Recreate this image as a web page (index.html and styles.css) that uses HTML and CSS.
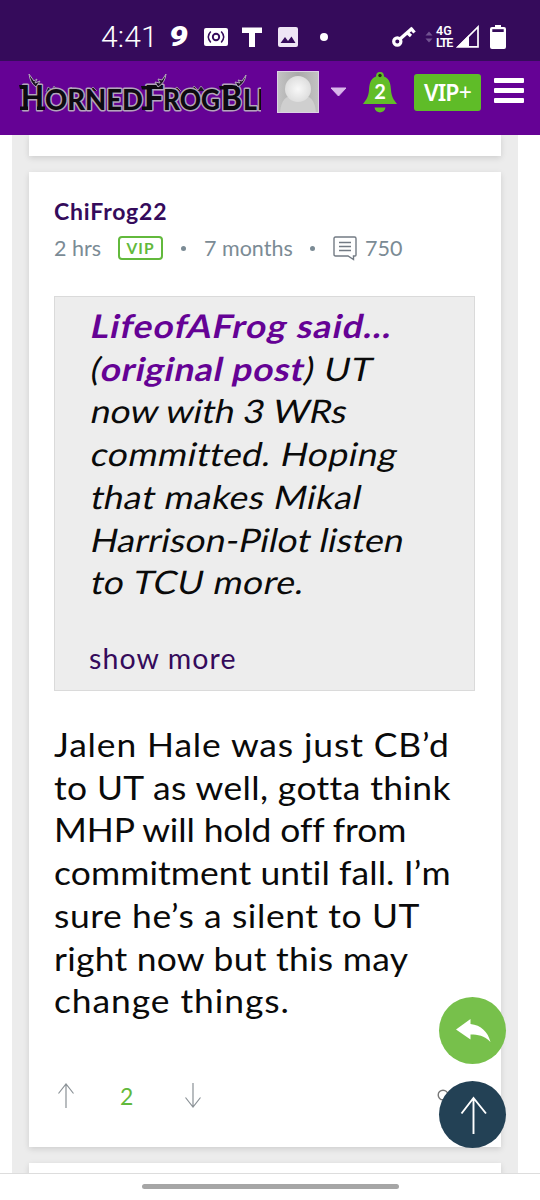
FILE: index.html
```html
<!DOCTYPE html>
<html lang="en">
<head>
<meta charset="utf-8">
<title>HornedFrogBlitz</title>
<link rel="stylesheet" href="styles.css">
</head>
<body>
<div class="screen">
  <header class="statusbar">
    <span class="clock">4:41</span>
    <span class="nine">9</span>
    <svg class="cam" width="24" height="20" viewBox="0 0 24 20"><rect y="1" width="24" height="18" rx="2" fill="#fff"/><circle cx="12" cy="10" r="3.2" fill="none" stroke="#350b5b" stroke-width="1.9"/><path d="M6.8 4.6Q1.8 10 6.8 15.4M17.2 4.6Q22.2 10 17.2 15.4" fill="none" stroke="#350b5b" stroke-width="1.5"/></svg>
    <svg class="tee" width="20" height="20" viewBox="0 0 20 20"><path d="M0 0.5H20V6H13V20H7V6H0Z" fill="#fff"/></svg>
    <svg class="photo" width="20" height="20" viewBox="0 0 20 20"><rect width="20" height="20" rx="2" fill="#eee5f5"/><path d="M2.5 16L7 10L10 14L13.5 9.5L17.5 16Z" fill="#350b5b"/></svg>
    <i class="dot"></i>
    <svg class="key" width="24" height="22" viewBox="0 0 24 22"><g fill="none" stroke="#fff"><circle cx="5.3" cy="15.5" r="3.6" stroke-width="3.2"/><path d="M8 13L20.5 2" stroke-width="3.4"/><path d="M19 2.5L22.5 6.5M15 6.5L19 10" stroke-width="3.3"/></g></svg>
    <svg class="updown" width="8" height="12" viewBox="0 0 8 12"><path d="M.5 4.5L4 .5L7.5 4.5ZM.5 7.5L4 11.5L7.5 7.5Z" fill="#725491"/></svg>
    <span class="network"><b>4G</b><b class="lte">LTE</b></span>
    <svg class="signal" width="23" height="23" viewBox="0 0 23 23"><path d="M2 21.8L22 2V21.8Z" fill="none" stroke="#fff" stroke-width="1.7"/><path d="M1 22L13 10V22Z" fill="#fff"/></svg>
    <svg class="battery" width="16" height="24" viewBox="0 0 16 24"><path d="M5 0H11V2H14Q16 2 16 4V22Q16 24 14 24H2Q0 24 0 22V4Q0 2 2 2H5Z" fill="#fff"/><path d="M2.3 4.2H13.7V7H2.3Z" fill="#350b5b"/></svg>
  </header>
  <nav class="navbar">
    <svg class="logo" width="244" height="46" viewBox="0 0 244 46">
      <path class="spikes" d="M29 20L31 15L35 18L37 14L41 20M51 19L54 15L58 19M72 19L76 15L80 19M95 19L100 16L105 19M155 19L160 15L164 19M174 19L177 14L181 18L184 14L188 19"/>
      <g class="logo-text">
        <text x="4" y="38" font-size="34" textLength="23" lengthAdjust="spacingAndGlyphs">H</text>
        <text x="28" y="38" font-size="27.500" textLength="98" lengthAdjust="spacingAndGlyphs">ORNED</text>
        <text x="127" y="38" font-size="34" textLength="20" lengthAdjust="spacingAndGlyphs">F</text>
        <text x="146" y="38" font-size="27.500" textLength="57" lengthAdjust="spacingAndGlyphs">ROG</text>
        <text x="204" y="38" font-size="34" textLength="21" lengthAdjust="spacingAndGlyphs">B</text>
        <text x="226" y="38" font-size="27.500" textLength="22" lengthAdjust="spacingAndGlyphs">LI</text>
      </g>
      <path class="serif" d="M2 13H9V17H3ZM3 34.500H11V38H3ZM20 34.500H28V38H20ZM124 14H131V17.500H125ZM125 34.500H135V38H125ZM202 14H208V17.500H203Z"/>
      <path class="horn" d="M19 15Q13 11 12 2L17 9L20 7L18 11L23 9Z"/>
      <path class="horn" d="M141 15Q148 11 149 2L145 8L141 7L143 11L138 10Z"/>
      <path class="horn" d="M221 15Q228 11 229 3L225 9L221 8L223 11L218 10Z"/>
    </svg>
    <svg class="avatar" width="42" height="42" viewBox="0 0 42 42"><defs><radialGradient id="face"><stop offset="0" stop-color="#f8f8f8"/><stop offset=".7" stop-color="#e6e6e6"/><stop offset="1" stop-color="#dedede"/></radialGradient><linearGradient id="back"><stop offset="0" stop-color="#c4c4c4"/><stop offset=".5" stop-color="#a9a9a9"/><stop offset="1" stop-color="#c4c4c4"/></linearGradient></defs><rect width="42" height="42" fill="url(#back)"/><path d="M3 42Q4 27 13 25H29Q38 27 39 42Z" fill="#cfcfcf"/><circle cx="21" cy="18" r="13" fill="url(#face)"/><rect x=".5" y=".5" width="41" height="41" fill="none" stroke="#ddd2e5"/></svg>
    <svg class="caret" width="17" height="10" viewBox="0 0 17 10"><path d="M1 1H16L8.5 9Z" fill="#d9b6eb" stroke="#d9b6eb" stroke-linejoin="round"/></svg>
    <div class="bell">
      <svg width="36" height="42" viewBox="0 0 36 42"><path d="M18 1C15 1 14 3 14 5.5C8 8 7.5 13 7 19C6.500 26 4 29 1 33H35C32 29 29.500 26 29 19C28.500 13 28 8 22 5.500C22 3 21 1 18 1ZM12.500 36.500H23.500C22.500 43 13.500 43 12.500 36.500Z" fill="#62bd28"/><circle cx="18" cy="4.500" r="1.700" fill="#26300f"/></svg>
      <span class="bell-count">2</span>
    </div>
    <span class="upgrade">VIP<span class="plus">+</span></span>
    <span class="menu"><i></i><i></i><i></i></span>
  </nav>

  <main class="feed">
    <div class="thread">
      <section class="card card-prev"></section>
      <article class="card post">
        <h2 class="author">ChiFrog22</h2>
        <div class="meta">
          <span class="ago">2 hrs</span>
          <span class="vip">VIP</span>
          <i class="sep"></i>
          <span class="months">7 months</span>
          <i class="sep"></i>
          <svg class="comment" width="24" height="25" viewBox="0 0 24 25"><path d="M2.500 1H21.500Q23 1 23 2.500V19Q23 20 22 20H20.500V23.500L15 20H2.500Q1 20 1 18.500V2.500Q1 1 2.500 1ZM6 6.500H18M6 10.500H18M6 14.500H18" fill="none" stroke="#737b84" stroke-width="1.400"/></svg>
          <span class="count">750</span>
        </div>
        <blockquote class="quote">
          <p class="lines">
            <span class="l q1"><b>LifeofAFrog said...</b></span>
            <span class="l q2">(<b>original post</b>) UT</span>
            <span class="l q3">now with 3 WRs</span>
            <span class="l q4">committed. Hoping</span>
            <span class="l q5">that makes Mikal</span>
            <span class="l q6">Harrison-Pilot listen</span>
            <span class="l q7">to TCU more.</span>
          </p>
          <a class="more">show more</a>
        </blockquote>
        <p class="lines body">
          <span class="l b1">Jalen Hale was just CB’d</span>
          <span class="l b2">to UT as well, gotta think</span>
          <span class="l b3">MHP will hold off from</span>
          <span class="l b4">commitment until fall. I’m</span>
          <span class="l b5">sure he’s a silent to UT</span>
          <span class="l b6">right now but this may</span>
          <span class="l b7">change things.</span>
        </p>
        <footer class="votes">
          <svg width="16" height="25" viewBox="0 0 16 25"><path d="M8 25V1M.5 10.500L8 1L15.500 10.500" fill="none" stroke="#8a9196" stroke-width="1.200"/></svg>
          <span class="score">2</span>
          <svg width="16" height="25" viewBox="0 0 16 25"><path d="M8 0V24M.5 14.500L8 24L15.500 14.500" fill="none" stroke="#8a9196" stroke-width="1.200"/></svg>
          <svg class="share" width="12" height="12" viewBox="0 0 12 12"><circle cx="6" cy="6" r="4.800" fill="none" stroke="#777" stroke-width="1.400"/></svg>
        </footer>
      </article>
      <section class="card card-next"></section>
    </div>
  </main>
  <div class="gesture"><i></i></div>

  <div class="floating">
    <button class="fab reply" aria-label="Reply"><svg width="68" height="68" viewBox="0 0 68 68"><path d="M17 32.500L31.500 22V27C42 28 49 35 51.500 45C45 38.500 39 37.500 31.500 37.500V42.500Z" fill="#fff"/></svg></button>
    <button class="fab top" aria-label="Back to top"><svg width="68" height="68" viewBox="0 0 68 68"><path d="M34.500 53V17M22.500 32.500L34.500 17L47 32.500" fill="none" stroke="#fff" stroke-width="1.900"/></svg></button>
  </div>
</div>
</body>
</html>
```
FILE: styles.css
```css
* { box-sizing: border-box; }
body { margin: 0; font-family: Lato, "Open Sans", sans-serif; color: #0a0a0a; font-variant-ligatures: none; }
svg { display: block; flex: none; }
i { flex: none; }
.screen { position: relative; width: 540px; height: 1200px; overflow: hidden; background: #fff; display: flex; flex-direction: column; }

.statusbar { flex: none; height: 61px; padding: 12px 0 0 101px; background: #350b5b; color: #fff; display: flex; align-items: center; }
.clock { width: 68px; font: 300 30px/30px Roboto, sans-serif; letter-spacing: .1px; flex: none; }
.nine { width: 35px; font: italic 900 27px/27px Roboto, sans-serif; padding-top: 2px; display: inline-block; transform: scaleX(1.25); transform-origin: left; }
.tee { margin-left: 14px; }
.photo { margin-left: 16px; }
.dot { width: 8px; height: 8px; margin-left: 22px; border-radius: 50%; background: #fff; }
.key { margin-left: 64px; }
.updown { margin-left: 9px; }
.network { width: 18px; margin-left: 3px; display: flex; flex-direction: column; font: 600 12.500px/12px Roboto, sans-serif; gap: 0; }
.network b { font-weight: 600; height: 12px; }
.lte { letter-spacing: -1.400px; }
.signal { margin-left: 2px; }
.battery { margin-left: 11px; }

.navbar { flex: none; height: 74px; padding-left: 17px; background: #650295; display: flex; align-items: center; padding-bottom: 12px; }
.logo { margin-top: 5px; overflow: hidden; }
.logo-text { font-family: Lato, sans-serif; font-weight: 900; fill: #0d0a10; stroke: #b3a6bb; stroke-width: 3px; paint-order: stroke; stroke-linejoin: round; }
.serif { fill: #0d0a10; }
.horn { fill: #1c1324; stroke: #b3a6bb; stroke-width: 1px; }
.spikes { fill: #1c1324; stroke: #a99bb2; stroke-width: .8px; }
.avatar { margin-left: 16px; }
.caret { margin-left: 11px; }
.bell { position: relative; margin-left: 15px; }
.bell-count { position: absolute; left: 0; right: 0; top: 7px; text-align: center; color: #fff; font: 700 20px/26px Lato, sans-serif; }
.upgrade { margin-left: 16px; width: 67px; height: 37px; border-radius: 3px; background: #5fbc28; color: #fff; text-align: center; font: 600 23px/36px "Noto Sans", sans-serif; letter-spacing: -.8px; }
.plus { font-weight: 400; }
.menu { margin-left: 13px; margin-top: -3px; width: 30px; display: flex; flex-direction: column; gap: 5px; }
.menu i { height: 5px; border-radius: 1px; background: #fff; }

.feed { height: 1038px; padding: 0 22px 0 12px; overflow: hidden; }
.thread { height: 100%; padding: 0 17px 0 16.500px; background: #ececec; display: flex; flex-direction: column; gap: 16px; }
.card { background: #fff; box-shadow: 0 2px 6px rgba(0,0,0,.13); flex: none; }
.card-prev { height: 21px; }
.card-next { height: 60px; }
.post { height: 975px; padding: 25px 26px 0 25.500px; }
.author { margin: 0; color: #350b5b; font-size: 23px; line-height: 28px; font-weight: 700; letter-spacing: .8px; }
.meta { height: 32px; margin-top: 7px; display: flex; align-items: center; color: #7b8b95; font-size: 21.500px; line-height: 32px; white-space: nowrap; }
.ago { width: 64px; }
.vip { width: 45px; height: 24px; border: 2px solid #62b93c; border-radius: 4px; color: #62b93c; text-align: center; font-size: 15.500px; line-height: 20px; font-weight: 700; letter-spacing: 1px; }
.sep { width: 5px; height: 5px; border-radius: 50%; background: #7b8b95; margin: 0 18px; }
.months { width: 88px; }
.comment { margin-right: 8px; }

.quote { margin: 32px 0 0; height: 395px; padding: 8px 0 0 34px; background: #ededed; border: 2px solid #dadada; border-width: 1.500px; }
.lines { margin: 0; font-size: 32.500px; line-height: 42.700px; }
.l { display: block; width: max-content; white-space: nowrap; transform: scaleX(1.09); transform-origin: 0 77%; }
.quote .l { transform: scaleX(1.09) skewX(-11deg); }
.quote b { color: #650295; font-weight: 700; }
.q1 { letter-spacing: 1px; }
.q2 { letter-spacing: .6px; }
.q4 { letter-spacing: .45px; }
.q5 { letter-spacing: .4px; }
.q6 { letter-spacing: .15px; }
.q7 { letter-spacing: .45px; }
.b1 { letter-spacing: .8px; }
.b2 { letter-spacing: .35px; }
.b3 { letter-spacing: -.1px; }
.b4 { letter-spacing: .1px; }
.b5 { letter-spacing: .55px; }
.b6 { letter-spacing: .25px; }
.b7 { letter-spacing: .85px; }
.more { display: block; margin: 33px 0 0; color: #350b5b; font-size: 28.500px; line-height: 42px; letter-spacing: 1.100px; }
.body { margin-top: 33px; }

.votes { display: flex; align-items: center; height: 30px; margin-top: 58px; padding-left: 4px; }
.score { width: 103px; padding-left: 46px; color: #62b93c; font-size: 23px; line-height: 30px; margin-right: 8px; }
.share { margin-left: 236px; margin-top: -2px; }

.gesture { flex: 1; background: #fff; border-top: 1px solid #ddd; display: flex; justify-content: center; padding-top: 10px; }
.gesture i { width: 257px; height: 5px; border-radius: 3px; background: #a6a6a6; }

.floating { position: absolute; left: 438.500px; top: 996.500px; display: flex; flex-direction: column; gap: 16.500px; }
.fab { width: 67.500px; height: 67.500px; padding: 0; border: 0; border-radius: 50%; display: block; }
.reply { background: #77c04b; }
.top { background: #234155; }
```
